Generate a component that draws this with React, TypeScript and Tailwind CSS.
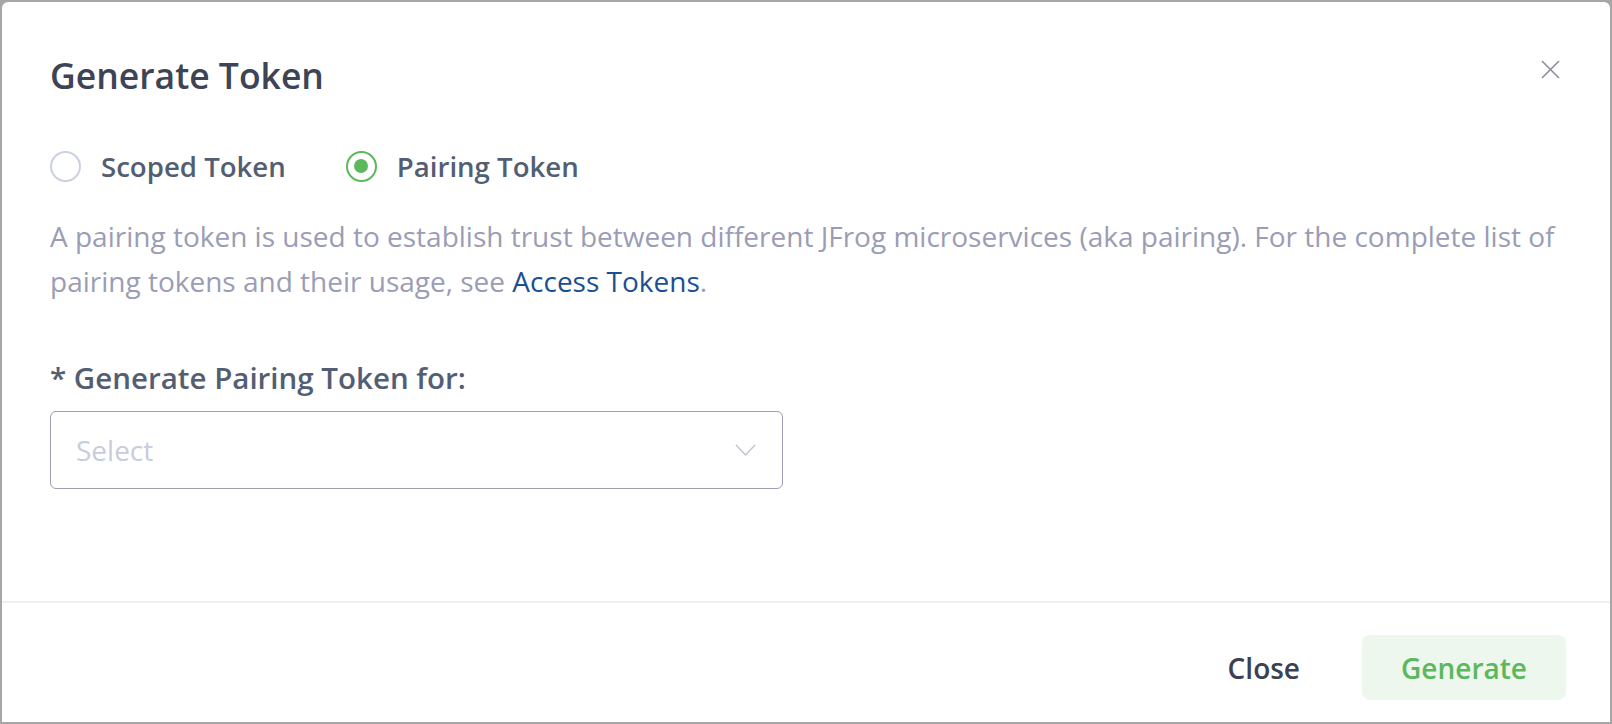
import React from "react";

function Radio({ checked, label }: { checked?: boolean; label: string }) {
  return (
    <label className="flex items-center gap-[20px] cursor-pointer">
      <span
        className={
          checked
            ? "flex h-[31px] w-[31px] items-center justify-center rounded-full border-2 border-[#5cb85c]"
            : "flex h-[31px] w-[31px] items-center justify-center rounded-full border-2 border-[#cbd0e2]"
        }
      >
        {checked && <span className="h-[14px] w-[14px] rounded-full bg-[#5cb85c]" />}
      </span>
      <span className="text-[27.6px] font-semibold leading-[32px] text-[#535e73]">{label}</span>
    </label>
  );
}

export default function App() {
  return (
    <div
      className="h-[724px] w-full bg-[#a6a6a6] p-[2px]"
      style={{ fontFamily: '"Open Sans", "Liberation Sans", sans-serif' }}
    >
      <div className="flex h-[720px] flex-col rounded-t-[6px] bg-white">
        <div className="flex-1 px-[48px] pt-[49px]">
          <div className="flex items-start justify-between">
            <h1 className="text-[35.5px] font-semibold leading-[48px] text-[#3d4456]">
              Generate Token
            </h1>
            <button className="mr-[2px] mt-[9px] h-[19px] w-[19px] text-[#8b8e9a]">
              <svg viewBox="0 0 19 19" width="19" height="19" fill="none" stroke="currentColor" strokeWidth="1.6">
                <path d="M1 1 L18 18 M18 1 L1 18" />
              </svg>
            </button>
          </div>

          <div className="mt-[51px] flex items-center gap-[60px]">
            <Radio label="Scoped Token" />
            <Radio checked label="Pairing Token" />
          </div>

          <p className="mt-[32px] text-[28px] leading-[45px] text-[#9a9db5]">
            A pairing token is used to establish trust between different JFrog microservices (aka
            pairing). For the complete list of pairing tokens and their usage, see{" "}
            <a className="text-[#1b4f93]">Access Tokens</a>.
          </p>

          <div className="mt-[54px] text-[29.5px] font-semibold leading-[40px] text-[#535e73]">
            * Generate Pairing Token for:
          </div>

          <div className="mt-[13px] flex h-[78px] w-[733px] items-center justify-between rounded-[6px] border-[1.5px] border-[#9d9fb5] pl-[25px] pr-[26px]">
            <span className="text-[28px] text-[#c7cce0]">Select</span>
            <svg viewBox="0 0 21 12" width="21" height="12" fill="none" stroke="#c3c5d0" strokeWidth="1.5">
              <path d="M1 1 L10.5 11 L20 1" />
            </svg>
          </div>
        </div>

        <div className="flex h-[121px] items-start justify-end gap-[62px] border-t-2 border-[#efefef] pr-[44px] pt-[32px]">
          <button className="flex h-[65px] items-center text-[28px] font-semibold text-[#3a4152]">
            Close
          </button>
          <button className="flex h-[65px] w-[204px] items-center justify-center rounded-[8px] bg-[#edf7ee] text-[28px] font-semibold text-[#5cb85c]">
            Generate
          </button>
        </div>
      </div>
    </div>
  );
}
